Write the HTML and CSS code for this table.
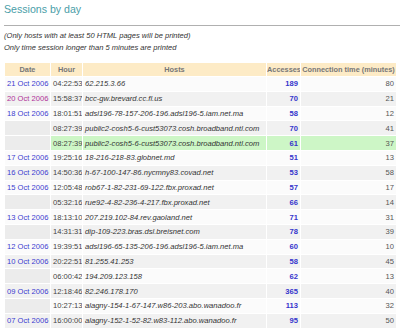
FILE: index.html
```html
<!DOCTYPE html>
<html>
<head>
<meta charset="utf-8">
<link rel="stylesheet" href="styles.css">
</head>
<body>
<h2 class="title">Sessions by day</h2>
<hr class="rule">
<p class="note">(Only hosts with at least 50 HTML pages will be printed)<br>Only time session longer than 5 minutes are printed</p>
<table class="sessions">
<colgroup>
<col class="c-date"><col class="c-hour"><col class="c-host"><col class="c-acc"><col class="c-time">
</colgroup>
<thead>
<tr><th>Date</th><th>Hour</th><th>Hosts</th><th>Accesses</th><th>Connection time (minutes)</th></tr>
</thead>
<tbody>
<tr class="w"><td class="date">21 Oct 2006</td><td class="hour">04:22:53</td><td class="host">62.215.3.66</td><td class="acc">189</td><td class="time">80</td></tr>
<tr class="g"><td class="date visited">20 Oct 2006</td><td class="hour">15:58:37</td><td class="host">bcc-gw.brevard.cc.fl.us</td><td class="acc">70</td><td class="time">21</td></tr>
<tr class="w"><td class="date">18 Oct 2006</td><td class="hour">18:01:51</td><td class="host">adsl196-78-157-206-196.adsl196-5.iam.net.ma</td><td class="acc">58</td><td class="time">12</td></tr>
<tr class="g"><td class="date empty"></td><td class="hour">08:27:39</td><td class="host">public2-cosh5-6-cust53073.cosh.broadband.ntl.com</td><td class="acc">70</td><td class="time">41</td></tr>
<tr class="hl"><td class="date empty"></td><td class="hour">08:27:39</td><td class="host">public2-cosh5-6-cust53073.cosh.broadband.ntl.com</td><td class="acc">61</td><td class="time">37</td></tr>
<tr class="w"><td class="date">17 Oct 2006</td><td class="hour">19:25:16</td><td class="host">18-216-218-83.globnet.md</td><td class="acc">51</td><td class="time">13</td></tr>
<tr class="g"><td class="date">16 Oct 2006</td><td class="hour">14:50:36</td><td class="host">h-67-100-147-86.nycmny83.covad.net</td><td class="acc">53</td><td class="time">58</td></tr>
<tr class="w"><td class="date">15 Oct 2006</td><td class="hour">12:05:48</td><td class="host">rob67-1-82-231-69-122.fbx.proxad.net</td><td class="acc">57</td><td class="time">17</td></tr>
<tr class="g"><td class="date empty"></td><td class="hour">05:32:16</td><td class="host">rue92-4-82-236-4-217.fbx.proxad.net</td><td class="acc">66</td><td class="time">14</td></tr>
<tr class="w"><td class="date">13 Oct 2006</td><td class="hour">18:13:10</td><td class="host">207.219.102-84.rev.gaoland.net</td><td class="acc">71</td><td class="time">31</td></tr>
<tr class="g"><td class="date empty"></td><td class="hour">14:31:31</td><td class="host">dip-109-223.bras.dsl.breisnet.com</td><td class="acc">78</td><td class="time">39</td></tr>
<tr class="w"><td class="date">12 Oct 2006</td><td class="hour">19:39:51</td><td class="host">adsl196-65-135-206-196.adsl196-5.iam.net.ma</td><td class="acc">60</td><td class="time">10</td></tr>
<tr class="g"><td class="date">10 Oct 2006</td><td class="hour">20:22:51</td><td class="host">81.255.41.253</td><td class="acc">58</td><td class="time">45</td></tr>
<tr class="w"><td class="date empty"></td><td class="hour">06:00:42</td><td class="host">194.209.123.158</td><td class="acc">62</td><td class="time">13</td></tr>
<tr class="g"><td class="date">09 Oct 2006</td><td class="hour">12:18:46</td><td class="host">82.246.178.170</td><td class="acc">365</td><td class="time">40</td></tr>
<tr class="w"><td class="date empty"></td><td class="hour">10:27:13</td><td class="host">alagny-154-1-67-147.w86-203.abo.wanadoo.fr</td><td class="acc">113</td><td class="time">32</td></tr>
<tr class="g"><td class="date">07 Oct 2006</td><td class="hour">16:00:00</td><td class="host">alagny-152-1-52-82.w83-112.abo.wanadoo.fr</td><td class="acc">95</td><td class="time">50</td></tr>
</tbody>
</table>
</body>
</html>
```
FILE: styles.css
```css
html, body {
  margin: 0;
  padding: 0;
  background: #ffffff;
}
body {
  font-family: "Liberation Sans", Arial, sans-serif;
  color: #333333;
  padding-left: 4px;
  overflow: hidden;
}
.title {
  margin: 0;
  padding-top: 3px;
  font-size: 10.6px;
  line-height: 13px;
  font-weight: normal;
  color: #4a9ea8;
}
.rule {
  margin: 9px 0 0 0;
  border: 0;
  border-top: 1px solid #b0b0b0;
  height: 0;
}
.note {
  margin: 4px 0 0 0;
  font-size: 7.55px;
  line-height: 12px;
  font-style: italic;
  color: #333333;
}
.sessions {
  margin-top: 8px;
  border-collapse: separate;
  border-spacing: 1px;
  table-layout: fixed;
  width: 393px;
  font-size: 7.6px;
}
.c-date { width: 45px; }
.c-hour { width: 31px; }
.c-host { width: 183px; }
.c-acc { width: 33px; }
.c-time { width: 95px; }
.sessions th {
  background: #fdebc6;
  color: #777777;
  font-weight: bold;
  font-size: 7.35px;
  height: 13px;
  padding: 0;
  text-align: center;
  white-space: nowrap;
  overflow: hidden;
}
.sessions td {
  height: 13.8px;
  padding: 0 2px;
  white-space: nowrap;
  overflow: hidden;
  box-sizing: border-box;
}
.w td { background: #fbfbfb; }
.g td { background: #f1f1f1; }
.hl td { background: #cdf6c6; }
.sessions td.empty { background: #ececec; }
.date { color: #3b3bd0; }
.date.visited { color: #b03098; }
.hour { color: #444444; }
.host { font-style: italic; color: #333333; }
.acc { text-align: right; font-weight: bold; color: #3535cc; }
.time { text-align: right; color: #555555; padding-right: 1px; }
```
